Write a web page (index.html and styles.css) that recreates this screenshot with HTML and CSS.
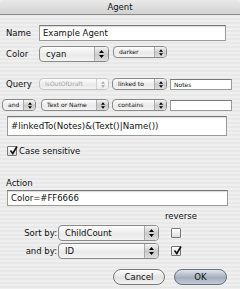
FILE: index.html
```html
<!DOCTYPE html>
<html lang="en">
<head>
    <meta charset="UTF-8">
    <title>Agent</title>
    <link rel="stylesheet" href="styles.css">
</head>
<body>
    <div class="window">
        <div class="titlebar">Agent</div>

        <div class="row name-row">
            <span class="lbl">Name</span>
            <div class="field name-field">Example Agent</div>
        </div>

        <div class="row color-row">
            <span class="lbl">Color</span>
            <div class="popup reg w-color"><span class="val">cyan</span><span class="arr"><svg width="5" height="8" viewBox="0 0 5 8"><path d="M2.5 0L5 3H0Z M0 5H5L2.5 8Z"/></svg></span></div>
            <div class="popup small w-darker"><span class="val">darker</span><span class="arr"><svg width="4" height="7" viewBox="0 0 5 8"><path d="M2.5 0L5 3H0Z M0 5H5L2.5 8Z"/></svg></span></div>
        </div>

        <div class="row query-row">
            <span class="lbl">Query</span>
            <div class="popup small disabled w-attr"><span class="val">IsOutOfDraft</span><span class="arr"><svg width="4" height="7" viewBox="0 0 5 8"><path d="M2.5 0L5 3H0Z M0 5H5L2.5 8Z"/></svg></span></div>
            <div class="popup small w-op"><span class="val">linked to</span><span class="arr"><svg width="4" height="7" viewBox="0 0 5 8"><path d="M2.5 0L5 3H0Z M0 5H5L2.5 8Z"/></svg></span></div>
            <div class="field small-field">Notes</div>
        </div>

        <div class="row and-row">
            <div class="popup small w-and"><span class="val">and</span><span class="arr"><svg width="4" height="7" viewBox="0 0 5 8"><path d="M2.5 0L5 3H0Z M0 5H5L2.5 8Z"/></svg></span></div>
            <div class="popup small w-attr2"><span class="val">Text or Name</span><span class="arr"><svg width="4" height="7" viewBox="0 0 5 8"><path d="M2.5 0L5 3H0Z M0 5H5L2.5 8Z"/></svg></span></div>
            <div class="popup small w-op"><span class="val">contains</span><span class="arr"><svg width="4" height="7" viewBox="0 0 5 8"><path d="M2.5 0L5 3H0Z M0 5H5L2.5 8Z"/></svg></span></div>
            <div class="field small-field"></div>
        </div>

        <div class="row formula-row">
            <div class="field formula">#linkedTo(Notes)&amp;(Text()|Name())</div>
        </div>

        <div class="row case-row">
            <span class="check on"><svg width="9" height="9" viewBox="0 0 9 9"><path d="M1.5 4.5L3.8 7.5L8 0.5" fill="none" stroke="#111" stroke-width="1.6"/></svg></span>
            <span class="case-lbl">Case sensitive</span>
        </div>

        <div class="row action-lbl-row">
            <span class="lbl">Action</span>
        </div>
        <div class="row action-row">
            <div class="field action">Color=#FF6666</div>
        </div>

        <div class="row reverse-row">
            <span class="reverse">reverse</span>
        </div>

        <div class="row sort-row">
            <span class="sort-lbl">Sort by:</span>
            <div class="popup reg w-sort"><span class="val">ChildCount</span><span class="arr"><svg width="5" height="8" viewBox="0 0 5 8"><path d="M2.5 0L5 3H0Z M0 5H5L2.5 8Z"/></svg></span></div>
            <span class="check"></span>
        </div>

        <div class="row sort-row andby-row">
            <span class="sort-lbl">and by:</span>
            <div class="popup reg w-sort"><span class="val">ID</span><span class="arr"><svg width="5" height="8" viewBox="0 0 5 8"><path d="M2.5 0L5 3H0Z M0 5H5L2.5 8Z"/></svg></span></div>
            <span class="check on"><svg width="9" height="9" viewBox="0 0 9 9"><path d="M1.5 4.5L3.8 7.5L8 0.5" fill="none" stroke="#111" stroke-width="1.6"/></svg></span>
        </div>

        <div class="row buttons">
            <button class="btn">Cancel</button>
            <button class="btn default">OK</button>
        </div>
    </div>
</body>
</html>
```

FILE: styles.css
```css
body {
    margin: 0;
    font-family: "DejaVu Sans", "Lucida Grande", sans-serif;
    font-size: 8.5px;
    color: #111;
}
.window {
    width: 240px;
    height: 289px;
    overflow: hidden;
    background: repeating-linear-gradient(#efefef 0 2px, #e8e8e8 2px 4px);
}
.titlebar {
    height: 14px;
    line-height: 14px;
    text-align: center;
    background: linear-gradient(#e9e9e9, #d2d2d2);
    border-bottom: 1px solid #8c8c8c;
    border-top-left-radius: 4px;
    border-top-right-radius: 4px;
}
.row {
    display: flex;
    align-items: center;
}
.lbl {
    width: 33px;
    flex: none;
}
.field {
    box-sizing: border-box;
    background: #fff;
    border: 1px solid #9a9a9a;
    border-top-color: #777;
    box-shadow: inset 0 1px 1px rgba(0, 0, 0, 0.15);
    padding: 0 3px;
    white-space: nowrap;
    overflow: hidden;
}

/* name + color */
.name-row {
    margin-top: 10px;
    padding-left: 6px;
    height: 16px;
}
.name-field {
    width: 187px;
    height: 16px;
    line-height: 14px;
}
.color-row {
    margin-top: 4px;
    padding-left: 6px;
    height: 17px;
}

/* popups */
.popup {
    box-sizing: border-box;
    display: flex;
    align-items: stretch;
    border: 1px solid #8a8a8a;
    border-radius: 4px;
    background: linear-gradient(#fdfdfd, #e9e9e9 60%, #f4f4f4);
    overflow: hidden;
    white-space: nowrap;
}
.popup .val {
    flex: 1;
    padding-left: 6px;
    overflow: hidden;
}
.popup .arr {
    flex: none;
    display: flex;
    align-items: center;
    justify-content: center;
    border-left: 1px solid #aaa;
    background: linear-gradient(#f4f4f4, #c9c9c9 55%, #dedede);
}
.popup.reg {
    height: 16px;
    line-height: 14px;
}
.popup.reg .arr {
    width: 13px;
}
.popup.small {
    height: 12px;
    line-height: 10px;
    font-size: 6px;
}
.popup.small .val {
    padding-left: 5px;
}
.popup.small .arr {
    width: 11px;
}
.popup.disabled {
    color: #a8a8a8;
    border-color: #c4c4c4;
}
.popup.disabled .arr {
    border-left-color: #d0d0d0;
    background: linear-gradient(#fafafa, #ececec);
}
.popup.disabled svg {
    fill: #aaa;
}
.w-color {
    width: 70px;
}
.w-darker {
    width: 54px;
    margin-left: 4px;
    margin-top: -3px;
}

/* query rows */
.query-row {
    margin-top: 16px;
    padding-left: 6px;
    height: 12px;
}
.w-attr {
    width: 70px;
}
.w-op {
    width: 55px;
    margin-left: 3px;
}
.small-field {
    width: 62px;
    height: 11px;
    line-height: 9px;
    font-size: 6px;
    margin-left: 3px;
    box-shadow: none;
}
.and-row {
    margin-top: 9px;
    padding-left: 2px;
    height: 12px;
}
.w-and {
    width: 34px;
}
.w-attr2 {
    width: 68px;
    margin-left: 5px;
}
.formula-row {
    margin-top: 5px;
    padding-left: 7px;
}
.formula {
    width: 220px;
    height: 20px;
    line-height: 18px;
    font-size: 8.7px;
}

/* checkboxes */
.check {
    box-sizing: border-box;
    width: 10px;
    height: 10px;
    border: 1px solid #777;
    border-radius: 1px;
    background: linear-gradient(#fff, #dcdcdc);
    position: relative;
    flex: none;
}
.check svg {
    position: absolute;
    left: 1px;
    top: -1px;
}
.case-row {
    margin-top: 9px;
    padding-left: 7px;
    height: 12px;
}
.case-lbl {
    margin-left: 2px;
}

/* action */
.action-lbl-row {
    margin-top: 20px;
    padding-left: 6px;
    height: 11px;
}
.action-row {
    margin-top: 2px;
    padding-left: 7px;
}
.action {
    width: 221px;
    height: 16px;
    line-height: 14px;
}

/* sorting */
.reverse-row {
    margin-top: 4px;
    padding-left: 165px;
    height: 11px;
}
.sort-row {
    margin-top: 4px;
    height: 15px;
}
.sort-lbl {
    width: 57px;
    text-align: right;
    padding-right: 1px;
    flex: none;
}
.w-sort {
    width: 101px;
}
.sort-row .check {
    margin-left: 12px;
}
.andby-row {
    margin-top: 3px;
}

/* buttons */
.buttons {
    margin-top: 11px;
    padding-left: 113px;
}
.btn {
    box-sizing: border-box;
    width: 52px;
    height: 16px;
    padding: 0;
    font-family: inherit;
    font-size: 8.5px;
    color: #111;
    border: 1px solid #777;
    border-radius: 8px;
    background: linear-gradient(#fdfdfd, #e2e2e2 55%, #f2f2f2);
}
.btn.default {
    width: 53px;
    margin-left: 9px;
    background: linear-gradient(#dde3ec, #a3adbc 55%, #c3cbd6);
    border-color: #66707e;
}
```
